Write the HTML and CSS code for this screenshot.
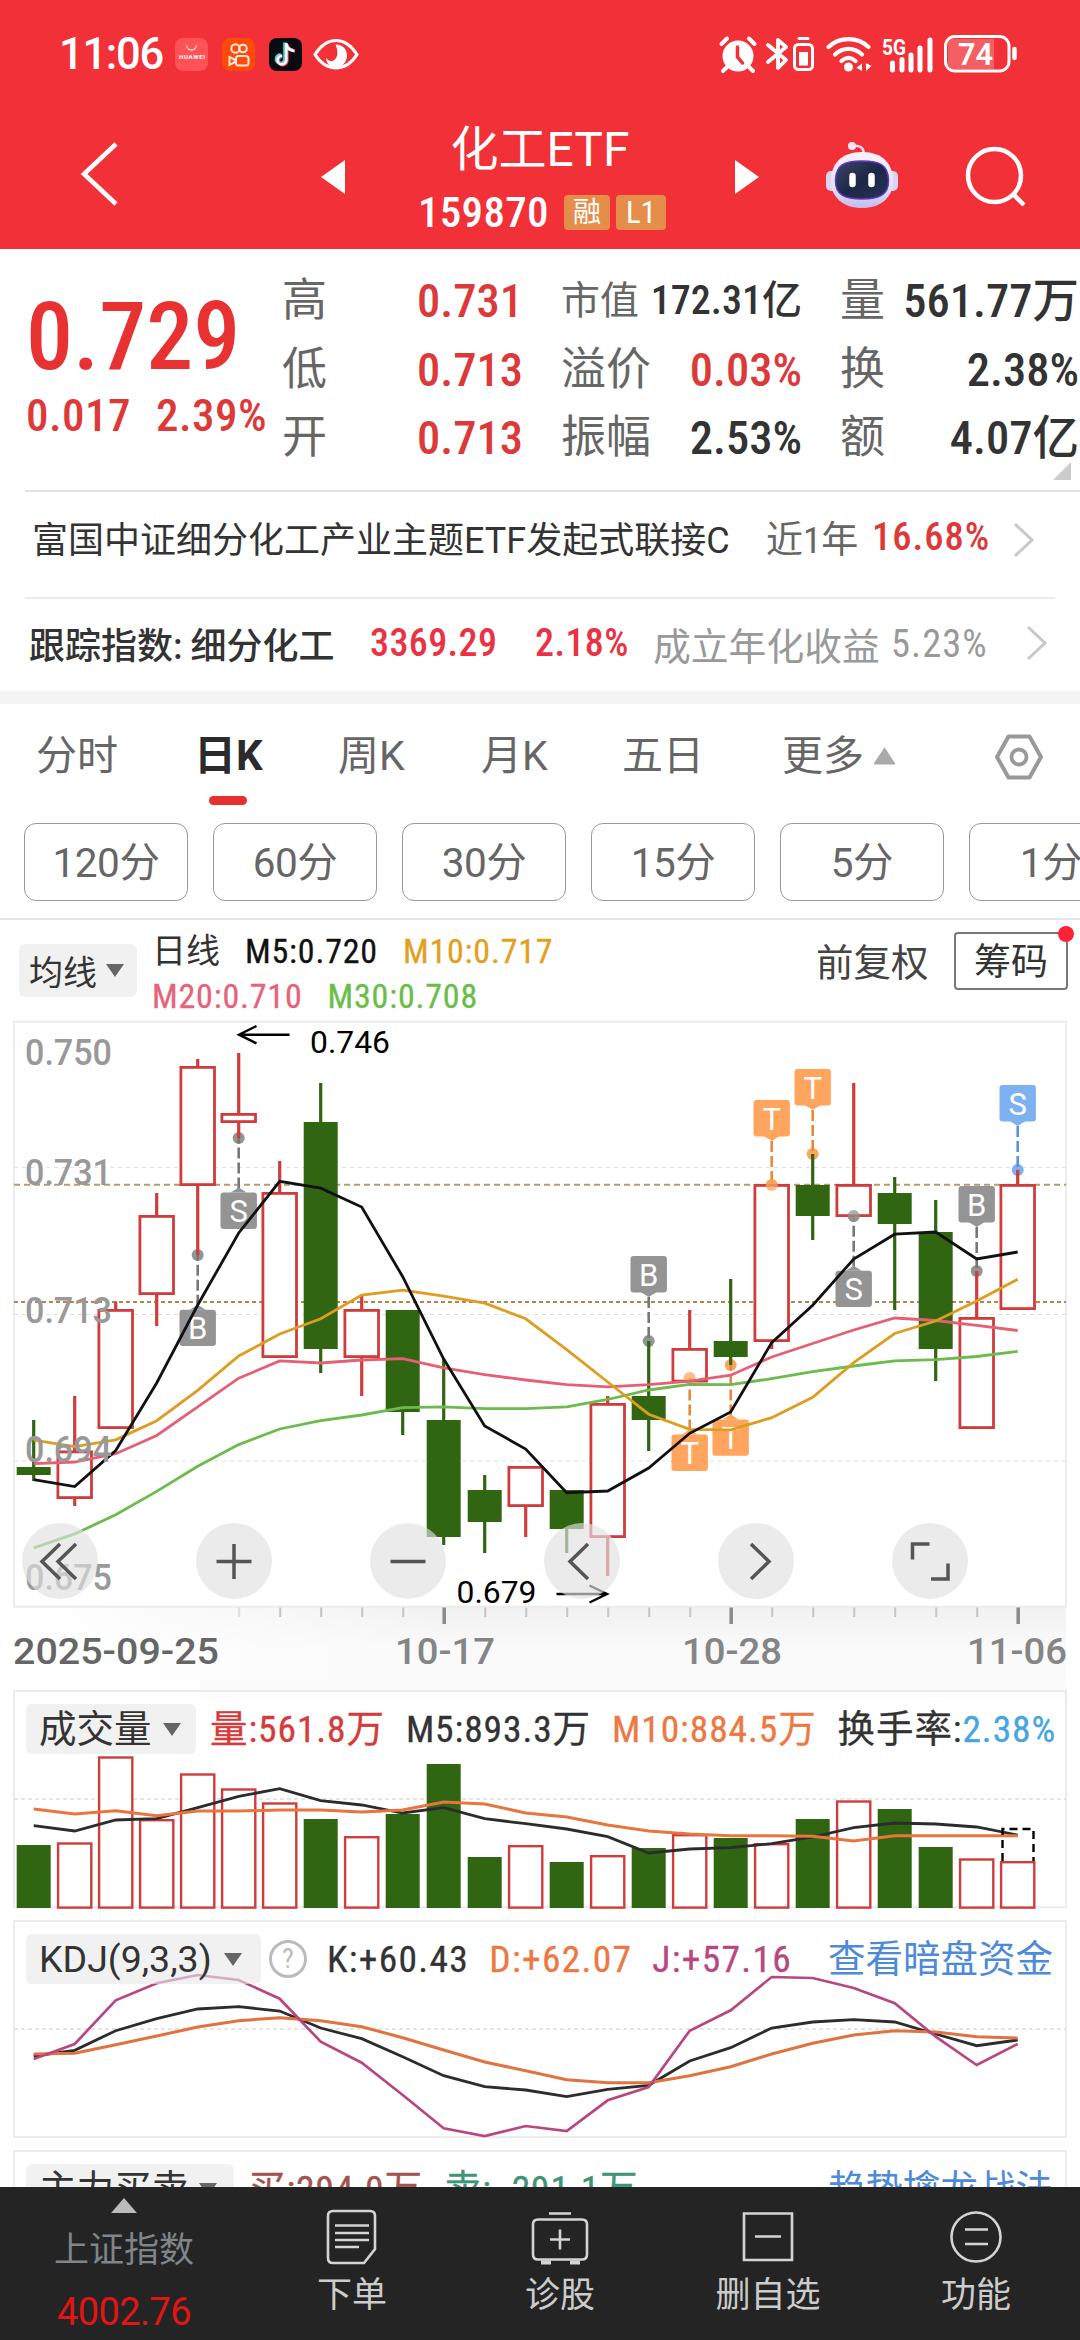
FILE: index.html
```html
<!DOCTYPE html>
<html lang="zh-CN">
<head>
<meta charset="utf-8">
<title>化工ETF 159870</title>
<link rel="stylesheet" href="styles.css">
</head>
<body>
<div class="screen">
  <header class="top">
    <div class="status">
      <span class="time">11:06</span>
      <div class="apps">
        <svg width="33" height="33" viewBox="0 0 33 33"><rect width="33" height="33" rx="8" fill="#ff5257"/><path d="M11.500 7a5 5 0 0 0 10 0" fill="none" stroke="#ffd0d0" stroke-width="1.300"/><text x="4" y="21" font-size="6.200" font-weight="700" fill="#fff" textLength="26">HUAWEI</text></svg>
        <svg width="33" height="33" viewBox="0 0 33 33"><rect width="33" height="33" rx="8" fill="#ff4a0c"/><g fill="none" stroke="#ffe9d8" stroke-width="2"><circle cx="13.500" cy="10.500" r="4.200"/><circle cx="21" cy="10.500" r="3.800"/><rect x="14" y="18" width="12.500" height="9.500" rx="2.500"/><path d="M12.500 21.500l-5-2.500v8l5-2.500z"/></g></svg>
        <svg width="33" height="33" viewBox="0 0 33 33"><rect width="33" height="33" rx="8" fill="#0a0a12"/><g fill="none" stroke-width="3.400"><path d="M16.500 5v17a4.300 4.300 0 1 1-4.300-4.800M16.500 6c.8 4 3.500 6 8 6.500" stroke="#25e5e0" transform="translate(-.6 -.5)"/><path d="M18 6v17a4.300 4.300 0 1 1-4.300-4.800M18 6.500c.8 4 3.500 6 8 6.500" stroke="#f8355c"/><path d="M17.300 5v17.500a4.300 4.300 0 1 1-4.300-4.800M17.300 6c.8 4 3.500 6.500 8 7" stroke="#fff" stroke-width="2.700"/></g></svg>
        <svg class="eye" width="46" height="33" viewBox="0 0 46 33"><path d="M2 16.500C8 7 15 2.500 23 2.500s15 4.500 21 14c-6 9.500-13 13.500-21 13.500S8 26 2 16.500z" fill="none" stroke="#fff" stroke-width="3.200"/><path d="M22.500 6.500c7 0 11.500 4.500 11.500 11s-5 12-11 12-9.800-4-10-10c1.500 3 4.500 4.200 7 3.200 4.500-2 6-8 2.500-16.200z" fill="#fff"/></svg>
      </div>
      <div class="sys">
        <svg class="s1" width="38" height="36" viewBox="0 0 38 36"><circle cx="19" cy="20" r="15.500" fill="#fff"/><path d="M8 31l-4 4M30 31l4 4M2.500 8L8 2.500M35.500 8L30 2.500" stroke="#fff" stroke-width="4" stroke-linecap="round"/><path d="M18.500 11v10l5 6" fill="none" stroke="#f13037" stroke-width="3.500" stroke-linecap="round"/></svg>
        <svg class="s2" width="48" height="36" viewBox="0 0 48 36"><path d="M2 9l18 15-8 8V4l8 7L2 26" fill="none" stroke="#fff" stroke-width="3.800" stroke-linejoin="round" stroke-linecap="round"/><rect x="28.500" y="8.500" width="18" height="25" rx="4" fill="none" stroke="#fff" stroke-width="3"/><rect x="33" y="16" width="9" height="13.500" fill="#fff"/><path d="M33 2.500h9" stroke="#fff" stroke-width="3" stroke-linecap="round"/></svg>
        <svg class="s3" width="46" height="36" viewBox="0 0 46 36"><g fill="none" stroke="#fff" stroke-width="4.200" stroke-linecap="round"><path d="M2.500 11c11-10.500 29-10.500 40 0M9 18.500c8-7.500 19-7.500 27 0M15.500 25c4.500-4 9.500-4 14 0"/></g><circle cx="22.500" cy="31" r="4.500" fill="#fff"/><path d="M36 27.500v7.500l-5.500-3.300zM40 27v8l5.500-5z" fill="#fff"/></svg>
        <svg class="s4" width="52" height="37" viewBox="0 0 52 37"><text x="0" y="18.500" font-size="22" font-weight="700" textLength="24" lengthAdjust="spacingAndGlyphs" fill="#fff">5G</text><path d="M10.500 27v7M20 23.500v10.500M29 19v15M38 12v22M48 4v30" stroke="#fff" stroke-width="5" stroke-linecap="round"/></svg>
        <svg class="s5" width="74" height="38" viewBox="0 0 74 38"><rect x="1.500" y="1.500" width="63.500" height="34.500" rx="9.500" fill="none" stroke="#fff" stroke-width="3"/><path d="M9 4h41v30H9a5 5 0 0 1-5-5V9a5 5 0 0 1 5-5z" fill="#f45f63"/><path d="M70.500 14v9" stroke="#fff" stroke-width="4.500" stroke-linecap="round"/><text x="14" y="30" font-size="31" font-weight="600" fill="#fff" textLength="35" lengthAdjust="spacingAndGlyphs">74</text></svg>
      </div>
    </div>
    <div class="titlebar">
      <svg class="back" width="42" height="68" viewBox="0 0 42 68"><path d="M37 4L5 34l32 30" fill="none" stroke="#fff" stroke-width="4.500"/></svg>
      <svg class="prev" width="24" height="34" viewBox="0 0 24 34"><path d="M24 0v34L0 17z" fill="#fff"/></svg>
      <div class="title">
        <h1>化工ETF</h1>
        <div class="code"><span>159870</span><i>融</i><i class="l1">L1</i></div>
      </div>
      <svg class="next" width="24" height="34" viewBox="0 0 24 34"><path d="M0 0v34l24-17z" fill="#fff"/></svg>
      <svg class="robot" width="74" height="68" viewBox="0 0 74 68">
        <defs><linearGradient id="rb" x1="0" y1="0" x2="0" y2="1"><stop offset="0" stop-color="#fbf3fa"/><stop offset=".7" stop-color="#e3dcf5"/><stop offset="1" stop-color="#c3b8ee"/></linearGradient>
        <linearGradient id="rf" x1="0" y1="0" x2="1" y2="1"><stop offset="0" stop-color="#3c4668"/><stop offset=".5" stop-color="#1f2747"/><stop offset="1" stop-color="#273156"/></linearGradient></defs>
        <path d="M27 5q12-2 12 9" fill="none" stroke="#efdcee" stroke-width="2.500"/><circle cx="27" cy="5" r="4" fill="#f4e4f2"/>
        <rect x="1" y="30" width="12" height="20" rx="5" fill="#dcd5f2"/><rect x="61" y="30" width="12" height="20" rx="5" fill="#dcd5f2"/>
        <path d="M37 11c21 0 31 12 31 29S55 67 37 67 6 57 6 40 16 11 37 11z" fill="url(#rb)"/>
        <path d="M37 20c18 0 26 4 26.500 19S54 58 37 58 10 54 10.500 39 19 20 37 20z" fill="url(#rf)" stroke="#5b3bc0" stroke-width="1.500"/>
        <path d="M27.500 35v8M46.500 35v8" stroke="#fff" stroke-width="6.500" stroke-linecap="round"/></svg>
      <svg class="search" width="62" height="62" viewBox="0 0 62 62"><circle cx="29.500" cy="29.500" r="26.500" fill="none" stroke="#fff" stroke-width="4.500"/><path d="M48 48l11 11" stroke="#fff" stroke-width="4.500"/></svg>
    </div>
  </header>

  <main class="content">
    <section class="quote">
      <div class="price"><b>0.729</b><p><span>0.017</span><span>2.39%</span></p></div>
      <dl class="col c1"><div><dt>高</dt><dd class="up">0.731</dd></div><div><dt>低</dt><dd class="up">0.713</dd></div><div><dt>开</dt><dd class="up">0.713</dd></div></dl>
      <dl class="col c2"><div class="small"><dt>市值</dt><dd>172.31亿</dd></div><div><dt>溢价</dt><dd class="up">0.03%</dd></div><div><dt>振幅</dt><dd>2.53%</dd></div></dl>
      <dl class="col c3"><div><dt>量</dt><dd>561.77万</dd></div><div><dt>换</dt><dd>2.38%</dd></div><div><dt>额</dt><dd>4.07亿</dd></div></dl>
      <svg class="corner" width="18" height="18" viewBox="0 0 18 18"><path d="M18 0v18H0z" fill="#ccc"/></svg>
    </section>
    <section class="fund">
      <span class="fname">富国中证细分化工产业主题ETF发起式联接C</span><span class="year">近1年</span><b class="up">16.68%</b>
      <svg width="22" height="36" viewBox="0 0 22 36"><path d="M2 2l17 16L2 34" fill="none" stroke="#c8c8c8" stroke-width="3"/></svg>
    </section>
    <section class="index">
      <span class="iname">跟踪指数: 细分化工</span><b class="v1">3369.29</b><b class="v2">2.18%</b><span class="since">成立年化收益</span><span class="sv">5.23%</span>
      <svg width="22" height="36" viewBox="0 0 22 36"><path d="M2 2l17 16L2 34" fill="none" stroke="#c8c8c8" stroke-width="3"/></svg>
    </section>
    <div class="strip"></div>
    <nav class="tabs">
      <span>分时</span><span class="on">日K</span><span>周K</span><span>月K</span><span>五日</span>
      <span class="more">更多<svg width="23" height="18" viewBox="0 0 23 18"><path d="M11.500 1L22 17H1z" fill="#aaa" stroke="#aaa" stroke-linejoin="round"/></svg></span>
      <svg class="gear" width="50" height="46" viewBox="0 0 50 46"><path d="M14.500 2.500h21L47 23 35.500 43.500h-21L3 23z" fill="none" stroke="#999" stroke-width="4" stroke-linejoin="round"/><circle cx="25" cy="23" r="7.500" fill="none" stroke="#999" stroke-width="3.800"/></svg>
    </nav>
    <div class="chips"><span>120分</span><span>60分</span><span>30分</span><span>15分</span><span>5分</span><span>1分</span></div>
    <section class="ma">
      <span class="drop ma-drop">均线<i></i></span>
      <div class="ma-vals"><p><span class="day">日线</span><span class="k">M5:0.720</span><span class="m10">M10:0.717</span></p><p><span class="m20">M20:0.710</span><span class="m30">M30:0.708</span></p></div>
      <span class="fq">前复权</span><span class="chip-btn">筹码</span>
    </section>
    <section class="pane kline">
      <svg id="kline" width="1080" height="670" viewBox="0 0 1080 670"></svg>
      <div class="controls">
        <span><svg viewBox="0 0 76 76"><path d="M38 21L20 38.500 38 56M54 21L36 38.500 54 56"/></svg></span>
        <span><svg viewBox="0 0 76 76"><path d="M38 21v35M20.500 38.500h35"/></svg></span>
        <span><svg viewBox="0 0 76 76"><path d="M20.500 38.500h35"/></svg></span>
        <span><svg viewBox="0 0 76 76"><path d="M44 21L26 38.500 44 56"/></svg></span>
        <span><svg viewBox="0 0 76 76"><path d="M33 21l18 17.500L33 56"/></svg></span>
        <span><svg viewBox="0 0 76 76"><path d="M20.500 36.500V21h17M56 40.500v15.500H39"/></svg></span>
      </div>
    </section>
    <section class="pane">
      <svg id="volume" width="1080" height="230" viewBox="0 0 1080 230"></svg>
      <div class="phead"><span class="drop">成交量<i></i></span><span class="t vr">量:561.8万</span><span class="t">M5:893.3万</span><span class="t vo">M10:884.5万</span><span class="t">换手率:<em>2.38%</em></span></div>
    </section>
    <section class="pane">
      <svg id="kdj" width="1080" height="230" viewBox="0 0 1080 230"></svg>
      <div class="phead kd"><span class="drop">KDJ(9,3,3)<i></i></span><span class="q">?</span><span class="t">K:+60.43</span><span class="t vo">D:+62.07</span><span class="t vj">J:+57.16</span><a>查看暗盘资金</a></div>
    </section>
    <section class="pane">
      <svg id="flow" width="1080" height="230" viewBox="0 0 1080 230"></svg>
      <div class="phead fl"><span class="drop">主力买卖<i></i></span><span class="t buy">买:294.0万</span><span class="t sell">卖: -291.1万</span><a>趋势擒龙战法</a></div>
    </section>
  </main>

  <footer class="bar">
    <div class="idx"><svg width="26" height="15" viewBox="0 0 26 15"><path d="M13 0l13 15H0z" fill="#bbb"/></svg><span>上证指数</span><b>4002.76</b></div>
    <div><svg viewBox="0 0 60 60"><path d="M11 4h37q5 0 5 5v33l-11 14H11q-5 0-5-5V9q0-5 5-5zM13 18.500h34M13 26h34M13 33h34M13 40h24"/></svg><span>下单</span></div>
    <div><svg viewBox="0 0 60 60"><path d="M19 6.500h22M8 12.500h44q5 0 5 5v30q0 5-5 5H8q-5 0-5-5v-30q0-5 5-5zM30 22.500v20M20 32.500h20"/><path d="M11 55.500h10M40 55.500h10" class="thick"/></svg><span>诊股</span></div>
    <div><svg viewBox="0 0 60 60"><path d="M6 6.500h48v46.500H6zM17 29.500h26"/></svg><span>删自选</span></div>
    <div><svg viewBox="0 0 60 60"><circle cx="30" cy="30" r="24.500"/><path d="M19 22.500h23M19 37h23"/></svg><span>功能</span></div>
  </footer>
</div>
<script src="charts.js"></script>
</body>
</html>
```
FILE: styles.css
```css
* { box-sizing: border-box; margin: 0; padding: 0; }
body { font-family: Roboto, "Noto Sans CJK SC", sans-serif; font-stretch: 75%; background: #fff; color: #333; }
i, em { font-style: normal; }
svg { display: block; flex: none; overflow: visible; }
span, b, i, dd { white-space: nowrap; }
.screen { width: 1080px; height: 2340px; display: flex; flex-direction: column; overflow: hidden; }

.top { height: 249px; background: #f13037; color: #fff; flex: none; }
.status { height: 108px; padding: 0 62px 0 59px; display: flex; align-items: center; }
.time { font-size: 43.500px; font-weight: 500; font-stretch: 100%; letter-spacing: -1.300px; width: 116px; line-height: 50px; padding-top: 2px; }
.apps { display: flex; gap: 14px; flex: 1; }
.eye { margin-left: -3px; }
.sys { display: flex; align-items: center; }
.s2 { margin-left: 9px; }
.s3 { margin-left: 12px; }
.s4 { margin-left: 10px; margin-right: 10px; }
.titlebar { height: 141px; display: flex; padding-left: 79px; }
.back { margin-top: 32px; }
.prev { margin: 52px 0 0 200px; }
.title { width: 390px; text-align: center; }
.title h1 { font-size: 48px; line-height: 60px; font-weight: 400; font-stretch: 100%; margin-top: 12px; }
.code { display: flex; align-items: center; height: 44px; margin-top: 10px; padding-left: 73px; }
.code span { font-size: 43px; font-weight: 500; line-height: 44px; width: 146px; text-align: left; letter-spacing: .3px; }
.code i { background: #e58e4a; height: 35px; width: 46px; border-radius: 4px; font-size: 28px; line-height: 35px; }
.code .l1 { width: 50px; margin-left: 6px; font-size: 31px; }
.next { margin-top: 52px; }
.robot { margin: 33px 0 0 66px; }
.search { margin: 38px 0 0 66px; }

.content { flex: 1; overflow: hidden; }
.quote { height: 241px; display: grid; grid-template-columns: 282px 241px 279px 277px; position: relative; }
.up { color: #dc3a3a !important; }
.price { padding: 33px 0 0 26px; color: #e83232; }
.price b { display: block; font-size: 94px; line-height: 110px; font-weight: 500; }
.price p { display: flex; gap: 25px; font-size: 45px; line-height: 50px; margin-top: -1px; color: #dd3939; letter-spacing: .5px; font-weight: 500; }
.col { padding-top: 18px; }
.col > div { display: flex; justify-content: space-between; align-items: center; height: 68.500px; font-size: 45px; line-height: 60px; }
.col dt { color: #666; }
.col dd { font-weight: 500; font-size: 46.500px; }
.c2, .c3 { padding-left: 38px; }
.small dt { font-size: 39px; }
.small dd { font-size: 40px !important; }
.corner { position: absolute; right: 9px; bottom: 10px; }
.fund, .index { display: flex; align-items: center; font-size: 36px; }
.fund { height: 107px; margin-left: 25px; border-top: 2px solid #e2e2e2; padding: 0 0 10px 7px; }
.fund span, .fund b { position: relative; top: -3px; }
.fname { width: 734px; font-size: 36px; font-stretch: 100%; }
.year { color: #666; width: 106px; font-size: 37px; }
.fund b { font-size: 38.500px; width: 141px; font-weight: 500; letter-spacing: 1px; }
.index { height: 94px; margin: 0 25px; border-top: 2px solid #ebebeb; padding: 0 0 4px 4px; }
.iname { width: 341px; font-size: 36px; font-weight: 500; }
.index b { color: #ea3244; font-weight: 500; font-size: 38px; width: 165px; letter-spacing: .4px; }
.index .v2 { width: 118px; }
.since { color: #999; font-size: 37.800px; width: 238px; }
.sv { color: #999; font-size: 38.500px; width: 135px; letter-spacing: 1px; }
.strip { height: 13px; background: #f4f4f4; }

.tabs { height: 119px; display: flex; padding: 22px 0 0 36px; font-size: 41px; line-height: 60px; color: #666; align-items: flex-start; font-stretch: 100%; }
.tabs span { width: 143px; flex: none; }
.tabs span:first-child { width: 158px; }
.tabs span.on { width: 144px; color: #2b2b2b; font-weight: 700; font-size: 42px; }
.tabs span.on::after { content: ""; display: block; width: 38px; height: 9px; border-radius: 4.500px; background: #e63030; margin: 10px 0 0 15px; }
.tabs span:nth-child(4) { width: 141px; }
.tabs span:nth-child(5) { width: 160px; }
.tabs .more { display: flex; align-items: center; gap: 9px; width: 212px; }
.gear { margin-top: 8px; }
.chips { height: 97px; display: flex; gap: 25px; padding-left: 24px; border-bottom: 2px solid #e6e6e6; overflow: hidden; }
.chips span { flex: none; width: 164px; height: 78px; border: 1.500px solid #999; border-radius: 12px; text-align: center; font-size: 40.500px; line-height: 78px; color: #666; font-stretch: 100%; letter-spacing: -.5px; }

.drop { background: rgba(233, 233, 233, .62); border-radius: 6px; display: flex; align-items: center; color: #333; }
.drop i { border: 9px solid transparent; border-top: 13px solid #666; border-bottom: 0; }
.ma { height: 90px; display: flex; align-items: flex-start; padding-left: 19px; }
.ma-drop { width: 118px; height: 53px; margin-top: 24px; padding-left: 10px; font-size: 34px; gap: 9px; }
.ma-vals { padding-left: 15px; width: 679px; font-size: 34px; margin-top: 9px; letter-spacing: .8px; -webkit-text-stroke: .3px; }
.day { letter-spacing: 0; -webkit-text-stroke: 0; }
.ma-vals p { display: flex; gap: 25px; height: 44.500px; line-height: 44px; }
.k { color: #111; } .m10 { color: #e2a01e; } .m20 { color: #e6637a; } .m30 { color: #6bbd4a; }
.fq { font-size: 37.500px; line-height: 50px; margin-top: 18px; width: 138px; color: #444; }
.chip-btn { width: 114px; height: 58px; border: 2px solid #777; border-radius: 4px; margin-top: 12px; font-size: 37px; line-height: 57px; text-align: center; position: relative; }
.chip-btn::after { content: ""; position: absolute; width: 16px; height: 16px; border-radius: 50%; background: #ff2338; right: -8px; top: -8px; }

.pane { display: grid; }
.pane > * { grid-area: 1 / 1; }
.controls { display: flex; gap: 98px; padding: 513px 0 0 22px; }
.controls span { width: 76px; height: 76px; border-radius: 50%; background: rgba(224, 224, 224, .65); }
.controls path { fill: none; stroke: #555; stroke-width: 3.500; }
svg text { font-family: Roboto, sans-serif; font-stretch: 100%; }

.phead { display: flex; align-items: center; height: 50px; margin-top: 24px; padding-left: 26px; font-size: 37.500px; line-height: 50px; gap: 21px; letter-spacing: .9px; }
.phead .t { -webkit-text-stroke: .3px; }
.phead .drop { height: 50px; width: 170px; padding-left: 13px; gap: 11px; margin-right: -7px; letter-spacing: 0; }
.kd .drop { width: 235px; font-stretch: 100%; gap: 12px; }
.kd { letter-spacing: 1.300px; gap: 20px; }
.fl .drop { width: 208px; gap: 10px; }
.phead em { color: #46a5e2; }
.vr { color: #d43b3b; } .vo { color: #ec7843; } .vj { color: #b84780; }
.q { width: 38px; height: 38px; border: 3px solid #bbb; border-radius: 50%; color: #bbb; font-size: 28px; line-height: 32px; text-align: center; letter-spacing: 0; margin-left: -5px; }
.phead a { color: #4d8ad8; font-size: 37.500px; letter-spacing: 0; margin-left: auto; padding-right: 27px; white-space: nowrap; }
.buy { color: #a3524f; } .sell { color: #3d9575; }

.bar { height: 153px; flex: none; background: #242424; display: grid; grid-template-columns: 248px repeat(4, 208px); color: #ccc; font-size: 35px; }
.bar > div { display: flex; flex-direction: column; align-items: center; }
.bar div:not(.idx) svg { width: 60px; height: 60px; margin-top: 20px; fill: none; stroke: #d4d4d4; stroke-width: 2.600; }
.bar .thick { stroke-width: 4; }
.bar span { line-height: 46px; margin-top: 6px; }
.bar .idx svg { margin-top: 11px; }
.bar .idx span { color: #7f858b; margin-top: 15px; }
.bar .idx b { font-weight: 400; color: #e01616; font-size: 38px; line-height: 46px; margin-top: 15px; font-stretch: 100%; letter-spacing: -.6px; }
```
FILE: charts.js
```js
const X0 = 33.7, STEP = 41;
const GREEN = '#306512', RED = '#d03c3c';
const px = i => X0 + i * STEP;
const el = (n, a) => '<' + n + Object.entries(a).map(([k, v]) => ` ${k}="${v}"`).join('') + '/>';
const line = (x1, y1, x2, y2, c, w = 2, o = {}) => el('line', { x1, y1, x2, y2, stroke: c, 'stroke-width': w, ...o });
const rect = (x, y, w, h, o) => el('rect', { x, y, width: w, height: h, ...o });
const poly = (ys, c, w = 2.8, k = 1) => el('polyline', { points: ys.map((y, i) => px(i).toFixed(1) + ',' + (y * k).toFixed(1)).join(' '), fill: 'none', stroke: c, 'stroke-width': w });
const label = (s, x, y, size, c, len, extra = '') => `<text x="${x}" y="${y}" font-size="${size}" fill="${c}" textLength="${len}" lengthAdjust="spacingAndGlyphs" ${extra}>${s}</text>`;
const frame = (y, h) => rect(14, y, 1052, h, { fill: 'none', stroke: '#ececec', 'stroke-width': 2 });

/* Daily candles: up/down, high, body top, body bottom, low */
const candles = [
  [0, 410, 457, 465, 471], [1, 386, 440.5, 489, 496], [1, 291.5, 299, 419, 419], [1, 183, 205, 285, 316],
  [1, 49, 56, 176, 245], [1, 43, 103, 113, 128], [1, 151, 182, 348, 348], [0, 73, 112, 339, 363],
  [1, 286, 299, 348, 386], [0, 300, 300, 402, 425], [0, 349, 410, 527, 535], [0, 465, 480, 512, 543],
  [1, 456, 456, 497, 527], [0, 480, 480, 519, 543], [1, 386, 393, 528, 566], [0, 331, 386, 410, 441],
  [1, 300, 338, 372.5, 372.5], [0, 269, 331, 347, 355], [1, 174, 174, 332, 339], [0, 144, 175, 206, 230],
  [1, 73, 174, 207, 207], [0, 167, 183, 214, 300], [0, 190, 222, 339, 371], [1, 261, 307, 419, 419], [1, 160, 174, 300, 300]
];
/* Trade markers: index, letter, colour, box top, anchor */
const GRAY = '#949494', ORANGE = '#ffa55e', BLUE = '#7eb1f2';
const marks = [
  [4, 'B', GRAY, 299.7, 245], [5, 'S', GRAY, 182.6, 128], [15, 'B', GRAY, 246, 331], [16, 'T', ORANGE, 424.6, 368],
  [17, 'T', ORANGE, 409.4, 355], [18, 'T', ORANGE, 90, 175], [19, 'T', ORANGE, 59, 144], [20, 'S', GRAY, 260.7, 206],
  [23, 'B', GRAY, 176, 261], [24, 'S', BLUE, 75, 160]
];
const stem = { [GRAY]: '#777', [ORANGE]: '#e8883c', [BLUE]: '#5b92dc' };

let s = '<defs><linearGradient id="v" x2="0" y2="1"><stop stop-color="#f1f1f1"/><stop offset=".6" stop-color="#fafafa"/></linearGradient><linearGradient id="h"><stop stop-color="#fff"/><stop offset=".12" stop-color="#fff" stop-opacity=".75"/><stop offset=".42" stop-color="#fff" stop-opacity="0"/></linearGradient></defs>';
s += rect(14, 597, 1052, 73, { fill: 'url(#v)' }) + rect(14, 597, 1052, 73, { fill: 'url(#h)' });
s += rect(14, 11.7, 1052, 585, { fill: '#fff' }) + frame(11.7, 585);
for (const y of [157.4, 304.5, 451]) s += line(14, y, 1066, y, '#e0e0e0', 1, { 'stroke-dasharray': '4 4' });
s += line(14, 174.8, 1066, 174.8, '#bb9b69', 2, { 'stroke-dasharray': '6 4' });
s += line(14, 292, 1066, 292, '#bd8448', 2, { 'stroke-dasharray': '4 3' });
for (let i = 5; i < 25; i++) {
  const big = i % 7 === 3;
  s += line(px(i) + .5, 597.5, px(i) + .5, big ? 614 : 607, big ? '#8a8a8a' : '#c4c4c4', big ? 3.5 : 2, { opacity: i === 5 ? .5 : 1 });
}
for (const [i, , c, , dot] of marks) s += el('circle', { cx: px(i), cy: dot, r: 6, fill: c });
candles.forEach(([up, hi, t, b, lo], i) => {
  const x = px(i);
  if (up) {
    if (hi < t) s += line(x, hi, x, t + 1, RED, 3.2);
    if (lo > b) s += line(x, b - 1, x, lo, RED, 3.2);
    s += rect(x - 16.8, t + 1.4, 33.6, b - t - 2.8, { fill: '#fff', stroke: RED, 'stroke-width': 2.8 });
  } else {
    s += line(x, hi, x, lo, GREEN, 3.2) + rect(x - 17, t, 34, b - t, { fill: GREEN });
  }
});
for (const [i, ch, c, top, dot] of marks) {
  const x = px(i), below = top > dot, edge = below ? top - 4 : top + 41;
  s += line(x, edge, x, dot, stem[c], 2.6, { 'stroke-dasharray': '11 4' });
  if ([16, 18, 20].includes(i)) s += el('circle', { cx: x, cy: dot, r: 6, fill: c, opacity: .75 });
  s += rect(x - 18.2, top, 36.4, 36.4, { rx: 3, fill: c });
  s += el('path', { d: below ? `M${x - 8} ${top}L${x} ${top - 5}L${x + 8} ${top}z` : `M${x - 8} ${top + 36}L${x} ${top + 41}L${x + 8} ${top + 36}z`, fill: c });
  s += `<text x="${x}" y="${top + 29.500}" font-size="31" fill="#fff" text-anchor="middle">${ch}</text>`;
}
s += poly([537.8, 523.9, 504.8, 481.4, 456.2, 434.6, 419, 410.7, 405, 397.7, 396.8, 398.6, 398.6, 396.8, 389.5, 380, 374.3, 374.7, 368.6, 361.7, 356, 350.9, 349.6, 346.5, 341.3], '#6cbb4c');
s += poly([453.6, 452, 443.7, 425.5, 396.8, 368.2, 350.9, 353, 350, 348.7, 357.8, 364.7, 370, 374.7, 376.9, 374.7, 371.2, 365.2, 347, 333.5, 320, 308, 310.5, 315.3, 320.5], '#e56074');
s += poly([430.2, 436.7, 429.8, 410.7, 380.4, 346, 324, 308.8, 285, 280.2, 286.2, 293.2, 308.8, 339.6, 372, 404.2, 419.4, 419.8, 407.7, 387.3, 352.6, 323.5, 311, 291, 269.3], '#de9d20');
s += poly([469.7, 476.6, 440.6, 373, 295, 223, 171.3, 178.2, 197, 266.7, 349, 416, 439, 482.7, 481, 458, 423.3, 402, 332.6, 295.3, 249, 224.2, 222, 249, 242], '#111');
[['0.750', 55], ['0.731', 174.5], ['0.713', 313], ['0.694', 451.5], ['0.675', 580]].forEach(([t, y]) => { s += label(t, 25, y, 36.5, '#999', 87, 'font-weight="500"'); });
s += el('path', { d: 'M289.500 24.700H239M256.500 16L239 24.700L256.500 33.300M556.500 584H607M589.500 575.500L607 584L589.500 592.500', fill: 'none', stroke: '#000', 'stroke-width': 2.4 });
s += label('0.746', 310, 43, 31.5, '#000', 80) + label('0.679', 456.5, 593, 31.5, '#000', 80);
s += label('2025-09-25', 13, 654, 36.5, '#666', 206, 'font-weight="500"');
[['10-17', 395], ['10-28', 682], ['11-06', 967]].forEach(([t, x]) => { s += label(t, x, 654, 36.5, '#858585', 100, 'font-weight="500"'); });
document.getElementById('kline').innerHTML = s;

const vols = [[0, 165], [1, 162.3], [1, 76.3], [1, 139], [1, 93.3], [1, 108.3], [1, 122.3], [0, 139], [1, 156], [0, 134], [0, 84], [0, 177], [1, 165], [0, 182], [1, 175], [0, 168], [1, 154], [0, 158], [1, 163], [0, 139], [1, 120.3], [0, 129], [0, 167], [1, 178.3], [1, 181]];
s = rect(200, 0, 866, 17, { fill: '#fbfbfb' }) + frame(11, 216.3) + line(14, 119, 1066, 119, '#e6e6e6', 2, { 'stroke-dasharray': '4 3' });
vols.forEach(([up, t], i) => {
  const x = px(i);
  s += up ? rect(x - 16.6, t + 1.2, 33.2, 226.4 - t, { fill: '#fff', stroke: RED, 'stroke-width': 2.4 }) : rect(x - 17, t, 34, 228 - t, { fill: GREEN });
});
s += poly([437, 453, 420, 416, 383, 349, 326, 362, 375, 399, 383, 416, 431, 447, 470, 519, 507, 503, 491, 471, 443, 429, 432, 441, 465], '#2c2c2c', 2.8, 1 / 3);
s += poly([387, 402, 392, 407, 393, 393, 390, 390, 396, 390, 366, 372, 399, 411, 435, 453, 462, 467, 467, 469, 483, 467, 467, 467, 467], '#e8743e', 3, 1 / 3);
s += el('path', { d: 'M1002.500 181V149H1033.500V181', fill: 'none', stroke: '#000', 'stroke-width': 2.4, 'stroke-dasharray': '8 5' });
document.getElementById('volume').innerHTML = s;

s = frame(11, 216) + line(14, 119, 1066, 119, '#e6e6e6', 2, { 'stroke-dasharray': '4 3' });
s += poly([438, 421, 362, 326, 297, 290, 303, 354, 386, 440, 497, 530, 540, 560, 538, 526, 453, 413, 354, 336, 329, 336, 372, 407, 390], '#2c2c2c', 2.8, 1 / 3);
s += poly([432, 430, 404, 378, 351, 332, 323, 332, 350, 383, 420, 456, 482, 509, 518, 518, 497, 470, 432, 400, 375, 362, 366, 380, 384], '#e0733f', 3, 1 / 3);
s += poly([447, 402, 271, 220, 195, 210, 266, 395, 458, 555, 655, 678, 648, 663, 571, 531, 362, 301, 201, 204, 234, 280, 380, 465, 402], '#b84780', 2.7, 1 / 3);
document.getElementById('kdj').innerHTML = s;
document.getElementById('flow').innerHTML = frame(11, 216);
```
